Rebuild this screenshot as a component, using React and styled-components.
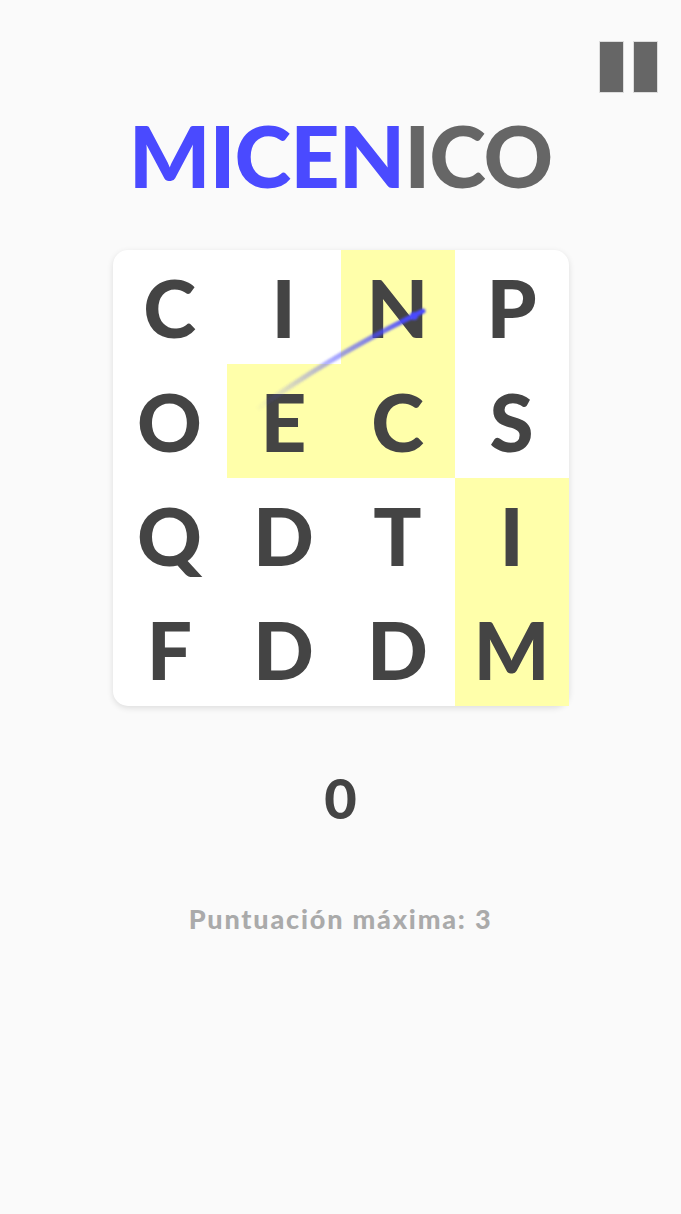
import styled, { createGlobalStyle } from "styled-components";

const Global = createGlobalStyle`
  html, body {
    margin: 0;
    padding: 0;
    background: #fafafa;
    font-family: Lato, "Open Sans", sans-serif;
  }
`;

const Page = styled.div`
  width: 681px;
  min-height: 1214px;
  display: flex;
  flex-direction: column;
  align-items: center;
  padding-top: 42px;
  box-sizing: border-box;
`;

const TopBar = styled.div`
  align-self: stretch;
  display: flex;
  justify-content: flex-end;
  padding-right: 24px;
`;

const Pause = styled.button`
  display: flex;
  gap: 11px;
  padding: 0;
  border: none;
  background: none;
  cursor: pointer;
`;

const Bar = styled.span`
  width: 23px;
  height: 50px;
  background: #666;
  box-shadow: 0 0 0 1px #ddd;
`;

const Title = styled.h1`
  margin: 20px 0 0;
  font-size: 86px;
  line-height: 1;
  font-weight: 900;
  letter-spacing: -1px;
  color: #666;
`;

const Blue = styled.span`
  color: #4a4aff;
`;

const Board = styled.div`
  position: relative;
  margin-top: 52px;
  display: grid;
  grid-template-columns: repeat(4, 114px);
  grid-template-rows: repeat(4, 114px);
  background: #fff;
  border-radius: 15px;
  box-shadow: 0 2px 6px rgba(0, 0, 0, 0.12);
`;

const Cell = styled.div`
  display: flex;
  align-items: center;
  justify-content: center;
  background: ${(p) => (p.$on ? "#ffffaa" : "transparent")};
  color: #444;
  font-size: 80px;
  font-weight: 900;
  line-height: 1;
`;

const Trail = styled.svg`
  position: absolute;
  left: 0;
  top: 0;
  pointer-events: none;
`;

const Score = styled.div`
  margin-top: 64px;
  font-size: 56px;
  font-weight: 900;
  color: #444;
  line-height: 1;
`;

const Best = styled.div`
  margin-top: 76px;
  font-size: 27px;
  font-weight: 900;
  color: #aaa;
  letter-spacing: 1.8px;
`;

const letters = ["CINP", "OECS", "QDTI", "FDDM"];
const selected = ["0-2", "1-1", "1-2", "2-3", "3-3"];

export default function App() {
  return (
    <Page>
      <Global />
      <TopBar>
        <Pause aria-label="pausa">
          <Bar />
          <Bar />
        </Pause>
      </TopBar>
      <Title>
        <Blue>MICEN</Blue>ICO
      </Title>
      <Board>
        {letters.map((row, r) =>
          row.split("").map((ch, c) => (
            <Cell key={`${r}-${c}`} $on={selected.includes(`${r}-${c}`)}>
              {ch}
            </Cell>
          ))
        )}
        <Trail width="456" height="456" viewBox="0 0 456 456">
          <defs>
            <linearGradient id="tr" x1="143" y1="160" x2="310" y2="62" gradientUnits="userSpaceOnUse">
              <stop offset="0" stopColor="#4a4aff" stopOpacity="0" />
              <stop offset="0.5" stopColor="#4a4aff" stopOpacity="0.5" />
              <stop offset="1" stopColor="#4a4aff" stopOpacity="1" />
            </linearGradient>
            <filter id="soft" x="-10%" y="-10%" width="120%" height="120%">
              <feGaussianBlur stdDeviation="0.8" />
            </filter>
          </defs>
          <g filter="url(#soft)">
            <path d="M143 160 Q215 108 300 66 L310 61" stroke="url(#tr)" strokeWidth="5" fill="none" strokeLinecap="round" />
            <path d="M284 74 L312 60 L292 68 Z" fill="#4a4aff" />
            <circle cx="301" cy="66" r="4" fill="#4a4aff" />
          </g>
        </Trail>
      </Board>
      <Score>0</Score>
      <Best>Puntuación máxima: 3</Best>
    </Page>
  );
}
